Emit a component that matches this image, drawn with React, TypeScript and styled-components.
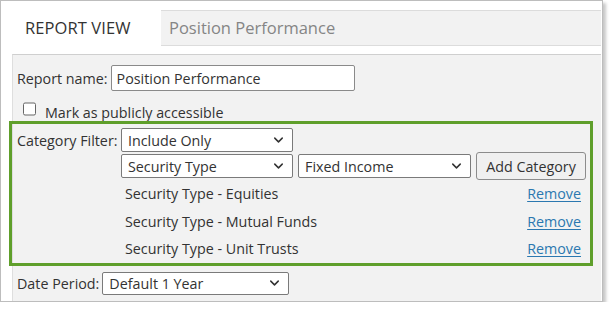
import styled, { createGlobalStyle } from "styled-components";
import { ChevronDown } from "lucide-react";

const GlobalStyle = createGlobalStyle`
  body {
    margin: 0;
    background: #ffffff;
    font-family: "Open Sans", "Noto Sans", sans-serif;
    color: #333333;
  }
`;

const Frame = styled.div`
  width: 601px;
  height: 300px;
  border: 1px solid #bdbdbd;
  background: #ffffff;
  box-shadow: 3px 3px 3px rgba(0, 0, 0, 0.22);
  display: flex;
  flex-direction: column;
`;

const Header = styled.div`
  display: flex;
  align-items: flex-start;
  padding-top: 9px;
  height: 44px;
`;

const TabLabel = styled.div`
  width: 136px;
  padding-left: 24px;
  line-height: 36px;
  font-size: 16.5px;
  color: #333;
  letter-spacing: 0.1px;
`;

const TitleBox = styled.div`
  flex: 1;
  margin-right: 1px;
  height: 34px;
  line-height: 34px;
  padding-left: 8px;
  background: #f2f2f2;
  border-top: 1px solid #dcdcdc;
  border-bottom: 1px solid #dcdcdc;
  font-size: 16.5px;
  color: #858585;
`;

const Panel = styled.div`
  flex: 1;
  margin-left: 11px;
  margin-right: 1px;
  background: #f2f2f2;
  border-top: 1px solid #cfcfcf;
  border-left: 1px solid #dedede;
  padding: 10px 0 0 4px;
  display: flex;
  flex-direction: column;
  font-size: 14.3px;
`;

const Row = styled.div<{ $gap?: number }>`
  display: flex;
  align-items: center;
  gap: ${({ $gap }) => $gap ?? 4}px;
`;

const Label = styled.span`
  white-space: nowrap;
`;

const TextInput = styled.input`
  width: 244px;
  height: 26px;
  box-sizing: border-box;
  border: 1px solid #8a8a8a;
  border-radius: 2px;
  padding: 0 5px;
  font: inherit;
  color: #333;
  background: #fff;
`;

const CheckRow = styled.label`
  display: flex;
  align-items: center;
  gap: 9px;
  height: 16px;
  line-height: 16px;
  margin: 14px 0 0 6px;
`;

const Box = styled.span`
  width: 13px;
  height: 13px;
  box-sizing: border-box;
  border: 1px solid #666;
  border-radius: 2px;
  background: #fff;
  transform: translateY(-4.5px);
`;

const Highlight = styled.div`
  margin: 0 8px 0 -8px;
  border: 3px solid #5f9f2b;
  padding: 4px 9px 0 5px;
  display: flex;
  flex-direction: column;
`;

const FilterGrid = styled.div`
  display: grid;
  grid-template-columns: 104px 1fr;
  align-items: center;
`;

const Controls = styled.div`
  display: flex;
  align-items: center;
  gap: 5px;
`;

const SelectWrap = styled.div<{ $w: number; $h?: number }>`
  position: relative;
  width: ${({ $w }) => $w}px;
  height: ${({ $h }) => $h ?? 24}px;
  box-sizing: border-box;
  border: 1px solid #7a7a7a;
  border-radius: 2px;
  background: #fff;
  display: flex;
  align-items: center;
  padding-left: 6px;
  color: #333;

  svg {
    position: absolute;
    right: 6px;
    top: 50%;
    transform: translateY(-50%);
  }
`;

const Button = styled.button`
  height: 28px;
  width: 110px;
  border: 1px solid #8c8c8c;
  border-radius: 3px;
  background: #f0f0f0;
  font: inherit;
  color: #333;
  padding: 0;
`;

const CatRow = styled.div`
  display: flex;
  justify-content: space-between;
  align-items: center;
  height: 27.5px;
  padding-left: 108px;
`;

const RemoveLink = styled.a`
  color: #2b78b0;
  text-decoration: underline;
  text-underline-offset: 2px;
  cursor: pointer;
`;

const DateRow = styled(Row)`
  margin-top: 6px;
`;

const Select = ({ value, w, h }: { value: string; w: number; h?: number }) => (
  <SelectWrap $w={w} $h={h}>
    {value}
    <ChevronDown size={15} strokeWidth={2.4} color="#333" />
  </SelectWrap>
);

const categories = ["Equities", "Mutual Funds", "Unit Trusts"];

export default function App() {
  return (
    <>
      <GlobalStyle />
      <Frame>
        <Header>
          <TabLabel>REPORT VIEW</TabLabel>
          <TitleBox>Position Performance</TitleBox>
        </Header>
        <Panel>
          <Row $gap={3}>
            <Label>Report name:</Label>
            <TextInput defaultValue="Position Performance" />
          </Row>
          <CheckRow>
            <Box />
            Mark as publicly accessible
          </CheckRow>
          <Highlight>
            <FilterGrid>
              <Label>Category Filter:</Label>
              <Select value="Include Only" w={172} h={24} />
              <span />
              <Controls>
                <Select value="Security Type" w={172} h={24} />
                <Select value="Fixed Income" w={173} h={24} />
                <Button>Add Category</Button>
              </Controls>
            </FilterGrid>
            {categories.map((c) => (
              <CatRow key={c}>
                <span>Security Type - {c}</span>
                <RemoveLink>Remove</RemoveLink>
              </CatRow>
            ))}
          </Highlight>
          <DateRow $gap={3}>
            <Label>Date Period:</Label>
            <Select value="Default 1 Year" w={187} h={23} />
          </DateRow>
        </Panel>
      </Frame>
    </>
  );
}
